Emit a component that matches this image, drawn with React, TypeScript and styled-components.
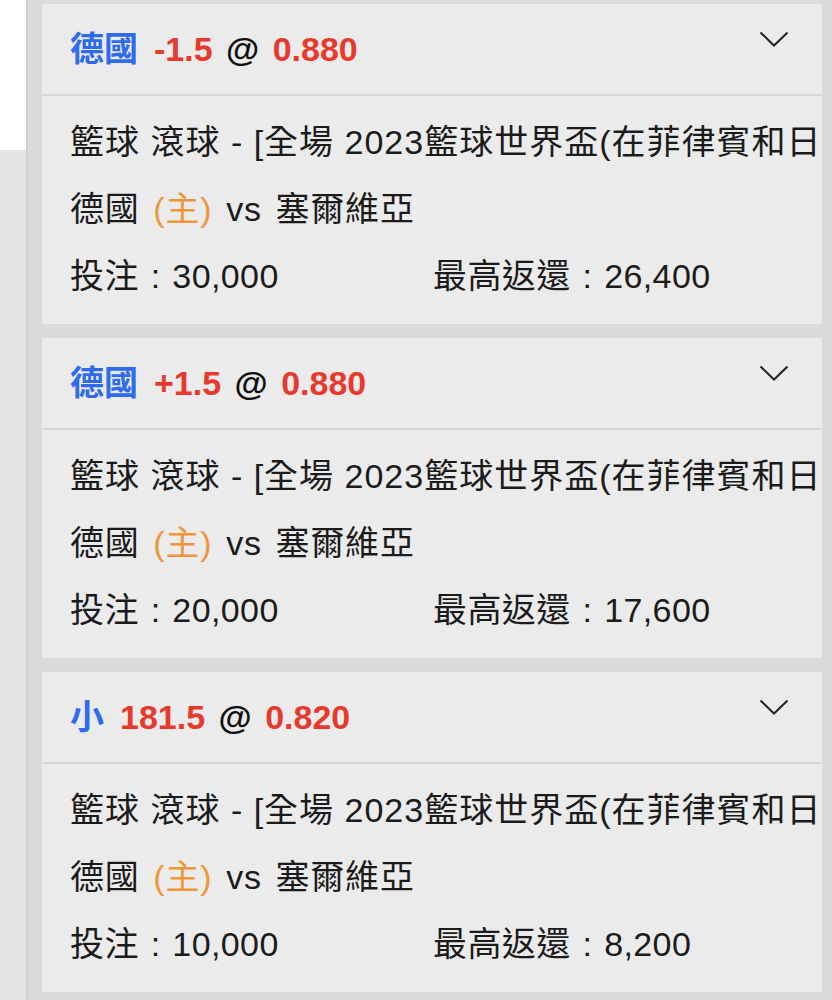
import React from "react";
import styled, { createGlobalStyle } from "styled-components";

const GlobalStyle = createGlobalStyle`
  html, body {
    margin: 0;
    padding: 0;
    background: #ffffff;
  }
  body {
    font-family: "Liberation Sans", "Noto Sans CJK TC", sans-serif;
    -webkit-font-smoothing: antialiased;
  }
`;

const Page = styled.div`
  display: flex;
  width: 832px;
  height: 1000px;
  overflow: hidden;
`;

const LeftRail = styled.div`
  display: flex;
  flex-direction: column;
  width: 26px;
  flex-shrink: 0;
  background: #e4e4e4;
`;

const RailTop = styled.div`
  height: 150px;
  background: #ffffff;
`;

const BetList = styled.div`
  flex: 1;
  min-width: 0;
  display: flex;
  flex-direction: column;
  gap: 14px;
  padding: 4px 10px 0 14px;
  background: #dadada;
  border-left: 2px solid #d0d0d0;
`;

const Card = styled.div`
  flex-shrink: 0;
  min-width: 0;
  overflow: hidden;
  background: #ebebeb;
`;

const CardHeader = styled.div`
  display: flex;
  align-items: center;
  justify-content: space-between;
  height: 84px;
  padding: 0 33px 6px 28px;
  border-bottom: 2px solid #d7d7d7;
`;

const Selection = styled.div`
  font-size: 34px;
  font-weight: 700;
  color: #111111;
  white-space: nowrap;
  word-spacing: 4px;
`;

const Pick = styled.span`
  color: #2e6bef;
  margin-right: 16px;
`;

const Odds = styled.span`
  color: #e8392d;
`;

const Chevron = styled.svg`
  flex-shrink: 0;
  width: 30px;
  height: 16px;
  margin-top: -15px;
`;

const CardBody = styled.div`
  padding: 13px 0 14px 28px;
  overflow: hidden;
  color: #1b1b1b;
  font-size: 34px;
  letter-spacing: 0.8px;
  word-spacing: 3.5px;
`;

const Line = styled.div`
  height: 67px;
  line-height: 67px;
  white-space: nowrap;
`;

const EventLine = styled(Line)`
  letter-spacing: 1px;
  word-spacing: 0;
`;

const Home = styled.span`
  color: #f0963a;
`;

const StakeRow = styled(Line)`
  display: grid;
  grid-template-columns: 363px 1fr;
  letter-spacing: 0.4px;
  word-spacing: 2px;
`;

type Bet = {
  pick: string;
  line: string;
  odds: string;
  stake: string;
  maxReturn: string;
};

const bets: Bet[] = [
  { pick: "德國", line: "-1.5", odds: "0.880", stake: "30,000", maxReturn: "26,400" },
  { pick: "德國", line: "+1.5", odds: "0.880", stake: "20,000", maxReturn: "17,600" },
  { pick: "小", line: "181.5", odds: "0.820", stake: "10,000", maxReturn: "8,200" },
];

const BetCard = ({ bet }: { bet: Bet }) => (
  <Card>
    <CardHeader>
      <Selection>
        <Pick>{bet.pick}</Pick>
        <Odds>{bet.line}</Odds> @ <Odds>{bet.odds}</Odds>
      </Selection>
      <Chevron viewBox="0 0 30 16" fill="none">
        <polyline points="1.5,1.5 15,14.5 28.5,1.5" stroke="#222222" strokeWidth="2" />
      </Chevron>
    </CardHeader>
    <CardBody>
      <EventLine>籃球 滾球 - [全場 2023籃球世界盃(在菲律賓和日本、印尼舉行)]</EventLine>
      <Line>
        德國 <Home>(主)</Home> vs 塞爾維亞
      </Line>
      <StakeRow>
        <span>投注 : {bet.stake}</span>
        <span>最高返還 : {bet.maxReturn}</span>
      </StakeRow>
    </CardBody>
  </Card>
);

const App = () => (
  <>
    <GlobalStyle />
    <Page>
      <LeftRail>
        <RailTop />
      </LeftRail>
      <BetList>
        {bets.map((bet, i) => (
          <BetCard bet={bet} key={i} />
        ))}
      </BetList>
    </Page>
  </>
);

export default App;
